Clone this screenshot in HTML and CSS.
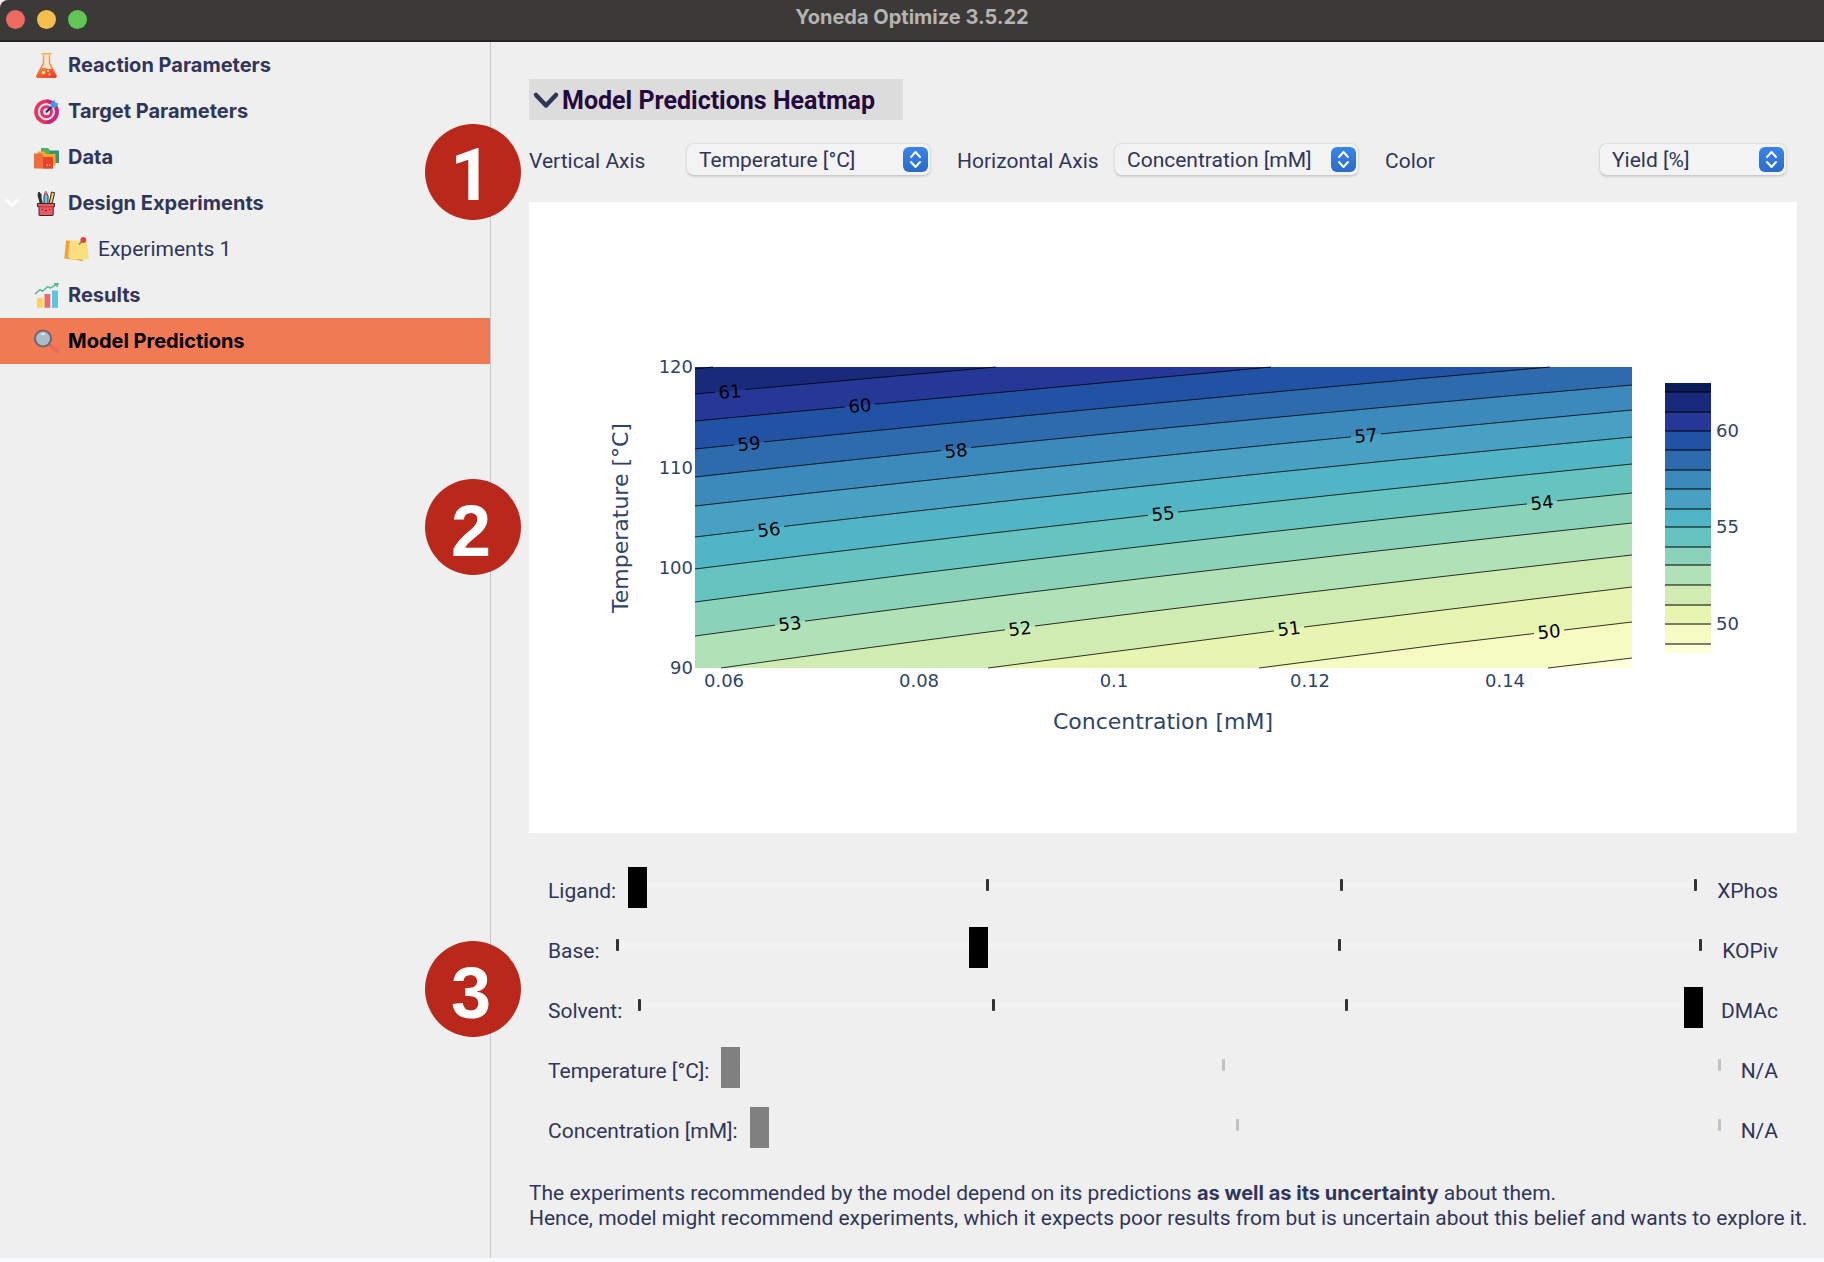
FILE: index.html
```html
<!DOCTYPE html>
<html lang="en">
<head>
<meta charset="utf-8">
<title>Yoneda Optimize 3.5.22</title>
<link rel="stylesheet" href="styles.css">
</head>
<body>
<div class="window">
  <header class="titlebar">
    <div class="lights">
      <button class="light light-close" type="button" aria-label="Close"></button>
      <button class="light light-min" type="button" aria-label="Minimize"></button>
      <button class="light light-max" type="button" aria-label="Zoom"></button>
    </div>
    <h1 class="title">Yoneda Optimize 3.5.22</h1>
  </header>

  <div class="body">
    <nav class="sidebar">
      <a class="item" href="#reaction">
        <span class="twisty"></span>
        <svg class="icon" viewBox="0 0 25 25"><defs><linearGradient id="flask" x1="0" y1="0" x2="0" y2="1"><stop offset="0" stop-color="#fbb040"/><stop offset="1" stop-color="#f1502f"/></linearGradient><linearGradient id="liquid" x1="0" y1="0" x2="1" y2="1"><stop offset="0" stop-color="#f98b2c"/><stop offset="1" stop-color="#ee2d24"/></linearGradient></defs><path d="M9.500 1.500V10L3 22.500q-.6 1.500 1 1.500h17q1.600 0 1-1.500L15.500 10V1.500" fill="#fbe3d0" stroke="url(#flask)" stroke-width="1.400"/><path d="M8 .8h9" stroke="#fbb040" stroke-width="1.600" stroke-linecap="round"/><path d="M7.300 15.200q3-1 5.200.3t5.300-.3L22.500 24q-.3.800-1.500.8H4q-1.200 0-1.500-.8z" fill="url(#liquid)"/><circle cx="9.500" cy="19.500" r="1.700" fill="#ffd9b0"/><circle cx="14" cy="18" r="1" fill="#ffd9b0"/><circle cx="15.500" cy="21.500" r="1.200" fill="#ffb199"/></svg>
        <span>Reaction Parameters</span>
      </a>
      <a class="item" href="#target">
        <span class="twisty"></span>
        <svg class="icon" viewBox="0 0 25 25"><circle cx="12.500" cy="12.700" r="10.500" fill="#f4e6ec" stroke="#e8345c" stroke-width="3.600"/><path d="M12.500 2.200a10.500 10.500 0 0 1 0 21" fill="none" stroke="#c9277d" stroke-width="3.600"/><circle cx="12.500" cy="12.700" r="5" fill="#f6dfe8" stroke="#e32d68" stroke-width="3"/><path d="M12.500 12.700L19 6.500" stroke="#1c2f6b" stroke-width="2.200" stroke-linecap="round"/><path d="M16.500 8.500l.3-4L20.500.8l1 3 3.300 1-3.800 4z" fill="#3f9cf5"/></svg>
        <span>Target Parameters</span>
      </a>
      <a class="item" href="#data">
        <span class="twisty"></span>
        <svg class="icon" viewBox="0 0 25 25"><path d="M7 3h7l1.500 2.500H25V18H7z" fill="#35937a"/><path d="M7 3h7l1.500 2.500V9H7z" fill="#4cb05f"/><path d="M3.500 6.500h7L12 9h9.500v11.500h-18z" fill="#f9a72b"/><path d="M0 8.500h8l2 3.500h9v11.500H0z" fill="#ef6c3f"/><path d="M9 12h10v11.500H9z" fill="#ee4023"/><path d="M12.500 19.500h1.300v1.300h-1.300zM15 19.500h1.300v1.300H15z" fill="#ffe0d0"/></svg>
        <span>Data</span>
      </a>
      <a class="item" href="#design">
        <svg class="twisty" viewBox="0 0 34 14"><path d="M7 4.500l5 5 5-5" fill="none" stroke="#fff" stroke-width="2.600" stroke-linecap="round" stroke-linejoin="round"/></svg>
        <svg class="icon" viewBox="0 0 25 25"><path d="M5 1q3 2 2 6l1.500 6-2 .5L4.800 7Q3 4 5 1z" fill="#263238" stroke="#263238"/><path d="M10 5l1.800-4.500L14 5v8h-4z" fill="#6cc7e8" stroke="#263238"/><path d="M10.500 1h2.500v3h-2.500z" fill="#ee5a62"/><path d="M17.500 1l3.200.8L18 13h-3z" fill="#f4c542" stroke="#263238"/><path d="M3.500 12.500h17v3.200h-1.300V24q0 .5-.5.500H5.500q-.5 0-.5-.5v-8.300H3.500z" fill="#ee5a62" stroke="#30262e"/><path d="M5.500 15.800h13.200" stroke="#a83845"/><path d="M8.500 18v1M15.500 18v1M11 19.500q1 .8 2 0" stroke="#30262e" fill="none"/></svg>
        <span>Design Experiments</span>
      </a>
      <a class="item item-child" href="#experiments-1">
        <span class="twisty"></span>
        <svg class="icon" viewBox="0 0 25 25"><path d="M2 3.500l16 1-1 19L.3 21.500z" fill="#f3a23a"/><path d="M6 3.500l16.500.8L25 21.500q-5 2-18.500.5L4 20z" fill="#f9df7d"/><path d="M12 22.500l7 .3-.5 1.500z" fill="#e9952f"/><path d="M15 7.500l3.500-3.700" stroke="#7d8a55" stroke-width="1.500"/><circle cx="19.300" cy="3" r="2.900" fill="#e8413c"/></svg>
        <span>Experiments 1</span>
      </a>
      <a class="item" href="#results">
        <span class="twisty"></span>
        <svg class="icon" viewBox="0 0 25 25"><path d="M3 15h5.800v9.800H3z" fill="#fbd34d"/><path d="M10.500 11h5.800v13.800h-5.800z" fill="#f0666f"/><path d="M18 7.500h6v17.300h-6z" fill="#56c8e4"/><path d="M1 11l5-4.300 2.500 1.500 5-4.500 3 1.300 6-3.700M20 .8l4-.3-1.200 3.500" fill="none" stroke="#49b68c" stroke-width="1.400"/></svg>
        <span>Results</span>
      </a>
      <a class="item item-active" href="#predictions" aria-current="page">
        <span class="twisty"></span>
        <svg class="icon" viewBox="0 0 25 25"><path d="M15.500 15.500l2.500 2.500" stroke="#8b6b66" stroke-width="2"/><path d="M18 18l5 4.500" stroke="#ee6a59" stroke-width="4.500" stroke-linecap="round"/><circle cx="9" cy="9.500" r="8" fill="#a9bccb" stroke="#6d6568" stroke-width="2"/><path d="M7 4.500q2-.8 4 0v1.500H7z" fill="#dfe8ee"/></svg>
        <span>Model Predictions</span>
      </a>
    </nav>

    <main class="content">
      <button class="section-toggle" type="button" aria-expanded="true">
        <svg class="chevron" viewBox="0 0 28 20"><path d="M4 4l10 10.500L24 4" fill="none" stroke="#2e3558" stroke-width="4.500" stroke-linecap="round" stroke-linejoin="round"/></svg>
        <span>Model Predictions Heatmap</span>
      </button>

      <form class="axes">
        <div class="field">
          <label for="v-axis">Vertical Axis</label>
          <span class="select"><select id="v-axis"><option>Temperature [°C]</option><option>Concentration [mM]</option></select><svg class="stepper" viewBox="0 0 25 25"><path d="M8 10l4.500-5 4.500 5M8 15l4.500 5 4.500-5" /></svg></span>
        </div>
        <div class="field">
          <label for="h-axis">Horizontal Axis</label>
          <span class="select"><select id="h-axis"><option>Concentration [mM]</option><option>Temperature [°C]</option></select><svg class="stepper" viewBox="0 0 25 25"><path d="M8 10l4.500-5 4.500 5M8 15l4.500 5 4.500-5" /></svg></span>
        </div>
        <div class="field field-color">
          <label for="color">Color</label>
          <span class="select"><select id="color"><option>Yield [%]</option></select><svg class="stepper" viewBox="0 0 25 25"><path d="M8 10l4.500-5 4.500 5M8 15l4.500 5 4.500-5" /></svg></span>
        </div>
      </form>

      <figure class="chart">
        <svg viewBox="0 0 1268 631" role="img" aria-label="Yield by temperature and concentration">
          <defs>
            <mask id="gaps" maskUnits="userSpaceOnUse" x="0" y="0" width="1268" height="631">
              <rect width="1268" height="631" fill="#fff"/>
              <g fill="#000">
                <rect x="186" y="175" width="30" height="30"/><rect x="316" y="189" width="30" height="30"/><rect x="205" y="227" width="30" height="30"/><rect x="412" y="234" width="30" height="30"/><rect x="822" y="219" width="30" height="30"/><rect x="225" y="313" width="30" height="30"/><rect x="619" y="298" width="30" height="30"/><rect x="998" y="286" width="30" height="30"/><rect x="246" y="408" width="30" height="30"/><rect x="476" y="412" width="30" height="30"/><rect x="745" y="412" width="30" height="30"/><rect x="1005" y="415" width="30" height="30"/>
              </g>
            </mask>
          </defs>
          <rect x="166" y="165" width="937" height="301" fill="#1a2a7b"/>
          <path fill="#253897" d="M166 192L467 165H1103V466H166z"/>
          <path fill="#2252a3" d="M166 219L742 165H1103V466H166z"/>
          <path fill="#2e6bad" d="M166 247Q611 201 1021 165H1103V466H166z"/>
          <path fill="#3c8abb" d="M166 275Q587 228 1103 183V466H166z"/>
          <path fill="#48a0c3" d="M166 304Q587 256 1103 208V466H166z"/>
          <path fill="#52b5c5" d="M166 335Q587 284 1103 235V466H166z"/>
          <path fill="#65c4bf" d="M166 367Q587 314 1103 262V466H166z"/>
          <path fill="#8ad2ba" d="M166 400Q587 344 1103 291V466H166z"/>
          <path fill="#b1e1b6" d="M166 434Q587 376 1103 321V466H166z"/>
          <path fill="#d0ecb3" d="M192 466Q575 412 1103 353V466z"/>
          <path fill="#e8f5b1" d="M459 466Q781 423 1103 385V466z"/>
          <path fill="#f6fbc4" d="M730 466Q916 441 1103 420V466z"/>
          <path fill="#ffffd9" d="M1019 466L1103 456V466z"/>
          <g class="contours" mask="url(#gaps)">
            <path d="M166 167L184 165"/>
            <path d="M166 192L467 165"/>
            <path d="M166 219L742 165"/>
            <path d="M166 247Q611 201 1021 165"/>
            <path d="M166 275Q587 228 1103 183"/>
            <path d="M166 304Q587 256 1103 208"/>
            <path d="M166 335Q587 284 1103 235"/>
            <path d="M166 367Q587 314 1103 262"/>
            <path d="M166 400Q587 344 1103 291"/>
            <path d="M166 434Q587 376 1103 321"/>
            <path d="M192 466Q575 412 1103 353"/>
            <path d="M459 466Q781 423 1103 385"/>
            <path d="M730 466Q916 441 1103 420"/>
            <path d="M1019 466L1103 456"/>
          </g>
          <g class="contour-labels">
            <text transform="translate(201 190) rotate(-5)" y="6">61</text>
            <text transform="translate(331 204) rotate(-5)" y="6">60</text>
            <text transform="translate(220 242) rotate(-6)" y="6">59</text>
            <text transform="translate(427 249) rotate(-6)" y="6">58</text>
            <text transform="translate(837 234) rotate(-5)" y="6">57</text>
            <text transform="translate(240 328) rotate(-7)" y="6">56</text>
            <text transform="translate(634 312) rotate(-6)" y="6">55</text>
            <text transform="translate(1013 301) rotate(-6)" y="6">54</text>
            <text transform="translate(261 422) rotate(-7)" y="6">53</text>
            <text transform="translate(491 427) rotate(-7)" y="6">52</text>
            <text transform="translate(760 427) rotate(-7)" y="6">51</text>
            <text transform="translate(1020 430) rotate(-6)" y="6">50</text>
          </g>
          <g class="ticks-y">
            <text x="164" y="171">120</text><text x="164" y="272">110</text><text x="164" y="372">100</text><text x="164" y="472">90</text>
          </g>
          <g class="ticks-x">
            <text x="195" y="485">0.06</text><text x="390" y="485">0.08</text><text x="585" y="485">0.1</text><text x="781" y="485">0.12</text><text x="976" y="485">0.14</text>
          </g>
          <text class="axis-title" x="634" y="527">Concentration [mM]</text>
          <text class="axis-title" transform="translate(99 316) rotate(-90)">Temperature [°C]</text>
          <g>
            <rect x="1136" y="181" width="46" height="10" fill="#081d58"/>
            <rect x="1136" y="190" width="46" height="20" fill="#1a2a7b"/>
            <rect x="1136" y="210" width="46" height="19" fill="#253897"/>
            <rect x="1136" y="229" width="46" height="19" fill="#2252a3"/>
            <rect x="1136" y="248" width="46" height="20" fill="#2e6bad"/>
            <rect x="1136" y="268" width="46" height="19" fill="#3c8abb"/>
            <rect x="1136" y="287" width="46" height="20" fill="#48a0c3"/>
            <rect x="1136" y="307" width="46" height="18" fill="#52b5c5"/>
            <rect x="1136" y="325" width="46" height="20" fill="#65c4bf"/>
            <rect x="1136" y="345" width="46" height="18" fill="#8ad2ba"/>
            <rect x="1136" y="363" width="46" height="20" fill="#b1e1b6"/>
            <rect x="1136" y="383" width="46" height="20" fill="#d0ecb3"/>
            <rect x="1136" y="403" width="46" height="18" fill="#e8f5b1"/>
            <rect x="1136" y="421" width="46" height="21" fill="#f6fbc4"/>
            <rect x="1136" y="442" width="46" height="9" fill="#ffffd9"/>
            <path class="bar-lines" d="M1136 190h46M1136 210h46M1136 229h46M1136 248h46M1136 268h46M1136 287h46M1136 307h46M1136 325h46M1136 345h46M1136 363h46M1136 383h46M1136 403h46M1136 422h46M1136 442h46"/>
          </g>
          <g class="ticks-bar">
            <text x="1187" y="235">60</text><text x="1187" y="331">55</text><text x="1187" y="428">50</text>
          </g>
        </svg>
      </figure>

      <form class="sliders">
        <div class="slider">
          <label for="ligand">Ligand:</label>
          <div class="rail"><div class="marks"><i></i><i></i><i></i><i></i></div><input id="ligand" type="range" min="0" max="3" value="0"></div>
          <output for="ligand">XPhos</output>
        </div>
        <div class="slider">
          <label for="base">Base:</label>
          <div class="rail"><div class="marks"><i></i><i></i><i></i><i></i></div><input id="base" type="range" min="0" max="3" value="1"></div>
          <output for="base">KOPiv</output>
        </div>
        <div class="slider">
          <label for="solvent">Solvent:</label>
          <div class="rail"><div class="marks"><i></i><i></i><i></i><i></i></div><input id="solvent" type="range" min="0" max="3" value="3"></div>
          <output for="solvent">DMAc</output>
        </div>
        <div class="slider">
          <label for="temperature">Temperature [°C]:</label>
          <div class="rail"><div class="marks"><i></i><i></i><i></i></div><input id="temperature" type="range" min="0" max="2" value="0" disabled></div>
          <output for="temperature">N/A</output>
        </div>
        <div class="slider">
          <label for="concentration">Concentration [mM]:</label>
          <div class="rail"><div class="marks"><i></i><i></i><i></i></div><input id="concentration" type="range" min="0" max="2" value="0" disabled></div>
          <output for="concentration">N/A</output>
        </div>
      </form>

      <p class="note">The experiments recommended by the model depend on its predictions <strong>as well as its uncertainty</strong> about them.<br>Hence, model might recommend experiments, which it expects poor results from but is uncertain about this belief and wants to explore it.</p>
    </main>
  </div>

  <span class="callout callout-1">1</span>
  <span class="callout callout-2">2</span>
  <span class="callout callout-3">3</span>
</div>
</body>
</html>
```
FILE: styles.css
```css
* { box-sizing: border-box; }

body {
  margin: 0;
  background: #fafbfd;
  color: #2f3659;
  font: 21px/24px Roboto, "Liberation Sans", sans-serif;
}

.window {
  position: relative;
  display: flex;
  flex-direction: column;
  min-height: calc(100vh - 4px);
  background: #efefef;
}

.titlebar {
  display: grid;
  grid-template-columns: 1fr auto 1fr;
  align-items: center;
  height: 42px;
  padding: 0 6px 2px;
  background: #3b3a37;
  border-bottom: 2px solid #252422;
  border-top-left-radius: 8px;
}
.lights { display: flex; gap: 12px; }
.light { width: 19px; height: 19px; padding: 0; border: 0; border-radius: 50%; }
.light-close { background: #ed6a5f; }
.light-min { background: #f5bf4f; }
.light-max { background: #62c655; }
.title {
  margin: 0;
  padding-bottom: 4px;
  color: #b5b4b2;
  font: 700 20px/24px Inter, "Liberation Sans", sans-serif;
}

.body { display: flex; flex: 1; }

.sidebar { flex: 0 0 491px; border-right: 1px solid #c8c8c8; }
.item {
  display: flex;
  align-items: center;
  height: 46px;
  color: inherit;
  font: 700 20px/24px Inter, "Liberation Sans", sans-serif;
  text-decoration: none;
}
.twisty { width: 34px; height: 14px; flex: none; }
.icon { width: 25px; height: 25px; margin-right: 9px; flex: none; }
.item-child { padding-left: 30px; font: 21px/24px Roboto, "Liberation Sans", sans-serif; }
.item-active { background: #f07a53; color: #000; }

.content { flex: 1; min-width: 0; padding: 37px 27px 0 38px; }

.section-toggle {
  display: flex;
  align-items: center;
  width: 374px;
  height: 41px;
  padding: 2px 3px 0;
  border: 0;
  background: #dcdcdc;
  color: #25083c;
  font: 700 25px/30px Roboto, "Liberation Sans", sans-serif;
  white-space: nowrap;
}
.chevron { width: 28px; height: 20px; margin-right: 2px; flex: none; }

.axes {
  display: grid;
  grid-template-columns: repeat(3, 1fr);
  gap: 26px;
  margin-top: 23px;
  padding-right: 10px;
}
.field { display: flex; align-items: center; }
.field label { flex: 0 0 157px; padding-top: 2px; white-space: nowrap; }
.field .select { flex: 1; }
.field-color label { flex: 1; }
.field-color .select { flex: 0 0 188px; }
.select { display: grid; align-items: center; min-width: 0; }
.select select {
  grid-area: 1 / 1;
  width: 100%;
  height: 33px;
  padding: 1px 32px 0 12px;
  appearance: none;
  border: 1px solid #dedede;
  border-bottom-color: #cbcbcb;
  border-radius: 8px;
  background: #f3f3f3;
  box-shadow: 0 1px 2px rgba(0, 0, 0, .12);
  color: inherit;
  font: inherit;
}
.stepper {
  grid-area: 1 / 1;
  justify-self: end;
  width: 25px;
  height: 25px;
  margin-right: 3px;
  border-radius: 6px;
  background: linear-gradient(#3a85ea, #2a6acd);
  fill: none;
  stroke: #fff;
  stroke-width: 2px;
  stroke-linecap: round;
  stroke-linejoin: round;
  pointer-events: none;
}

.chart { margin: 26px 0 0; background: #fff; }
.chart svg { display: block; width: 100%; height: auto; font: 18px "DejaVu Sans", sans-serif; }
.contours { fill: none; stroke: #000; stroke-width: 1px; stroke-opacity: .8; }
.contour-labels { fill: #000; text-anchor: middle; }
.ticks-x, .ticks-y, .ticks-bar, .axis-title { fill: #2f4468; }
.ticks-x, .axis-title { text-anchor: middle; }
.ticks-y { text-anchor: end; }
.axis-title { font-size: 22px; }
.bar-lines { stroke: #000; stroke-width: 1px; }

.sliders { margin-top: 24px; padding: 0 19px; }
.slider { display: flex; align-items: center; gap: 12px; height: 60px; }
.slider label, .slider output { padding-top: 8px; white-space: nowrap; }
.rail { display: grid; flex: 1; align-items: start; height: 41px; padding-top: 15px; }
.rail input {
  grid-area: 1 / 1;
  appearance: none;
  width: calc(100% - 6px);
  height: 6px;
  margin: 0;
  background: #f2f2f2;
}
.rail input::-webkit-slider-thumb {
  appearance: none;
  width: 19px;
  height: 41px;
  margin-top: 5px;
  background: #000;
}
.rail input::-moz-range-thumb { width: 19px; height: 41px; border: 0; border-radius: 0; background: #000; }
.rail input:disabled { background: #f0f0f0; }
.rail input:disabled::-webkit-slider-thumb { background: #808080; }
.marks {
  z-index: 1;
  grid-area: 1 / 1;
  display: flex;
  justify-content: space-between;
  height: 12px;
  margin-top: -3px;
  padding: 0 8px 0 4px;
  pointer-events: none;
}
.marks i { width: 3px; border-radius: 1px; background: #333; }
.rail:has(input:disabled) .marks i { background: #c2c2c2; }
.rail:has(#ligand) i:nth-child(1),
.rail:has(#base) i:nth-child(2),
.rail:has(#solvent) i:nth-child(4),
.rail:has(input:disabled) i:nth-child(1) { visibility: hidden; }

.note { margin: 24px -20px 0 0; line-height: 25px; }
.note strong { font: 700 20px/24px Inter, "Liberation Sans", sans-serif; }

.callout {
  position: absolute;
  left: 425px;
  width: 96px;
  height: 96px;
  padding: 4px 4px 0 0;
  border-radius: 50%;
  background: #ba271b;
  color: #fff;
  font: 700 72px/96px "Liberation Sans", sans-serif;
  text-align: center;
}
.callout-1 { top: 124px; font-family: Roboto, "Liberation Sans", sans-serif; }
.callout-2 { top: 479px; }
.callout-3 { top: 941px; }
```
